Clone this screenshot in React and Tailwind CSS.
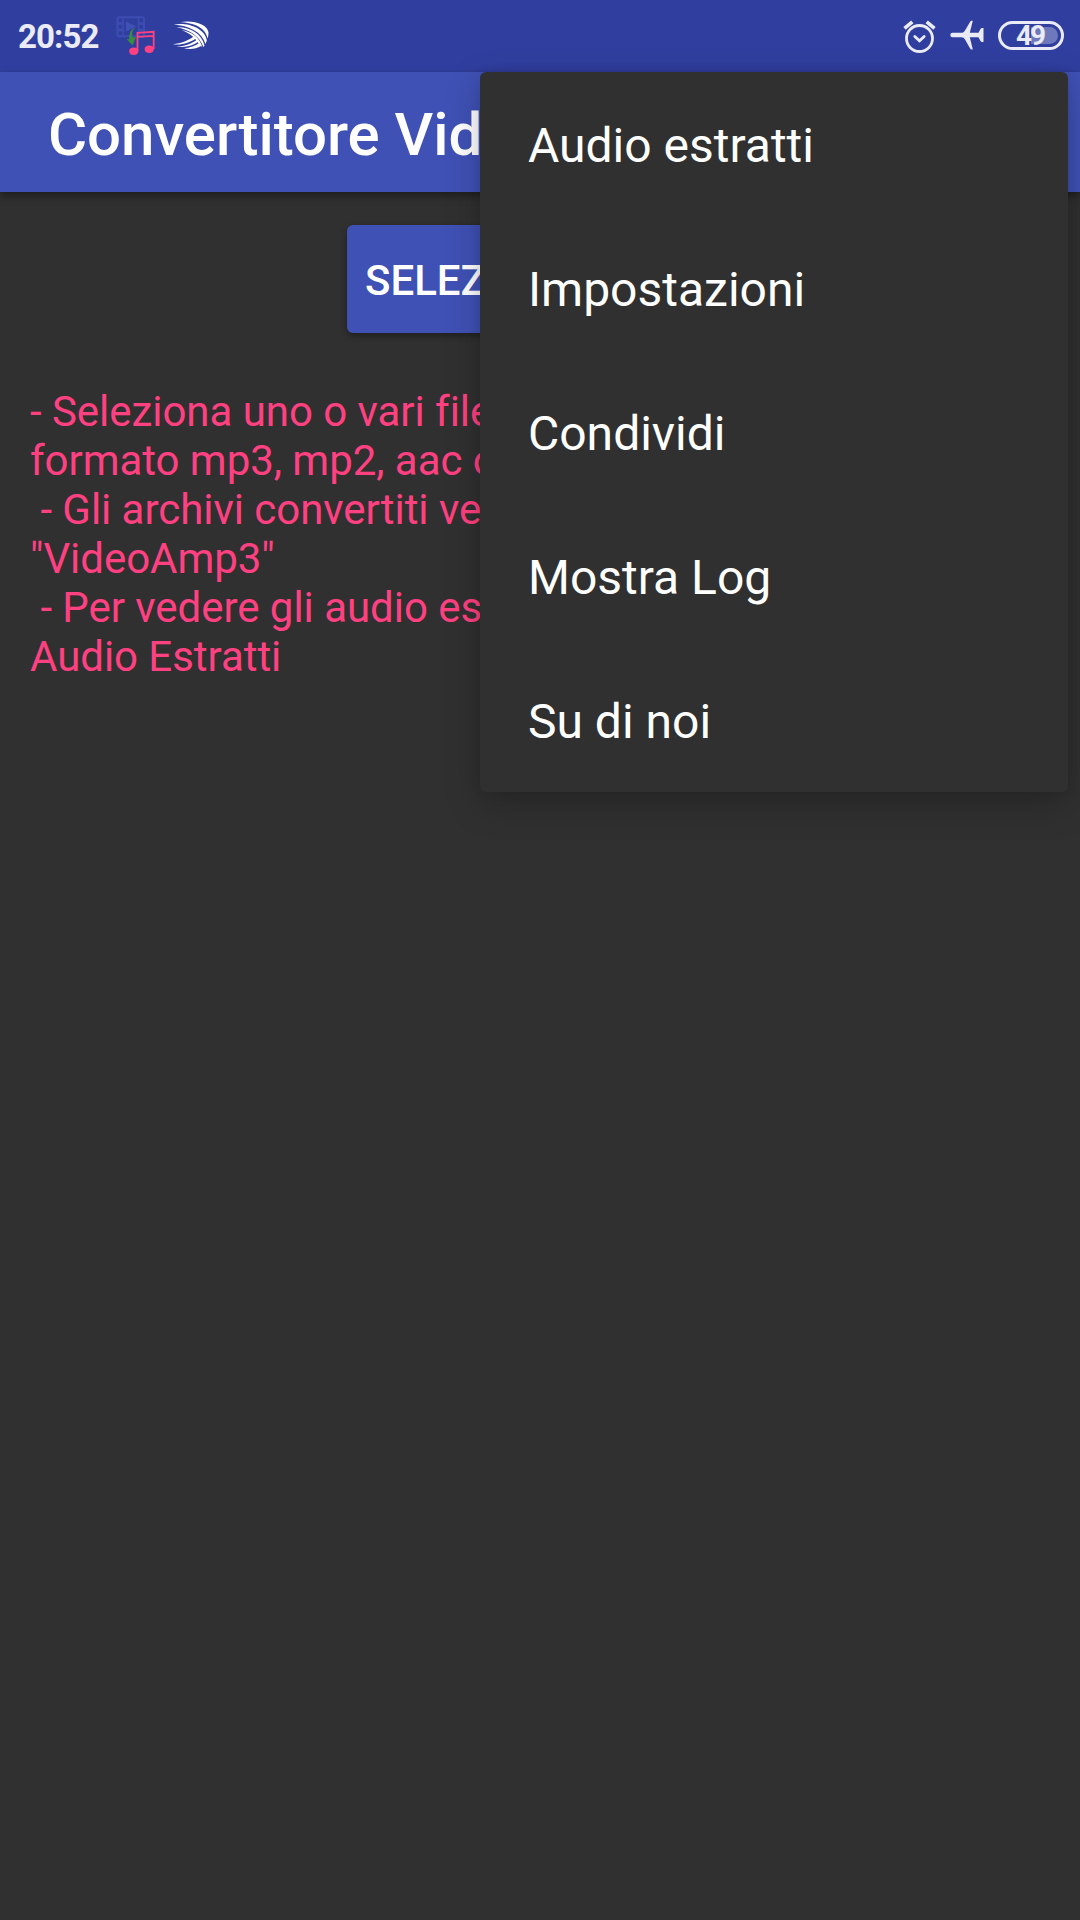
import React from 'react';

const menuItems = ['Audio estratti', 'Impostazioni', 'Condividi', 'Mostra Log', 'Su di noi'];

const hints = [
  '- Seleziona uno o vari file',
  'formato mp3, mp2, aac o',
  ' - Gli archivi convertiti ve',
  '"VideoAmp3"',
  ' - Per vedere gli audio es',
  'Audio Estratti',
];

const ConverterIcon = () => (
  <svg viewBox="0 0 40 40" width="40" height="40" fill="none">
    <rect x="1.5" y="1.2" width="26.5" height="19" rx="1.5" stroke="#3c4db2" strokeWidth="2" />
    <path d="M7 2v18M22.5 2v18" stroke="#3c4db2" strokeWidth="1.6" />
    <path d="M2 7.5h5M2 14h5M22.5 7.5h5M22.5 14h5" stroke="#3c4db2" strokeWidth="2.6" />
    <path d="M10 5.5l10 5-10 5z" fill="#3f51b5" />
    <path d="M19.8 11.5c-3.3 1.8-4.5 5.8-3 10l3.2-.5-3.4 8.5-6-6.5 2.900.2c-1-6 1.800-10.700 6.300-11.700z" fill="#388e3c" />
    <path d="M21.5 35V16.800l16.200-1V33M21.5 20.800l16.200-1" stroke="#ff4081" strokeWidth="1.8" />
    <ellipse cx="17.700" cy="35.200" rx="4.500" ry="3.700" fill="#ff4081" />
    <ellipse cx="33.200" cy="33.200" rx="4.500" ry="3.700" fill="#ff4081" />
  </svg>
);

const KeyboardIcon = () => (
  <svg viewBox="0 0 38 30" width="38" height="30" fill="#fff">
    <path d="M8 2.200C20-.5 36 4 36.500 12.500Q36.500 16 35.500 18.500C34 8 22 2.500 8 2.200z" />
    <path d="M1.500 4.500C16 2 33 8 34.800 20.500L33.500 24C30 12 17 5.500 1.500 4.500z" />
    <path d="M4.500 7.300C17 6.500 29.500 13 32.500 25.500L31.500 27C27 15.500 17 9.500 4.500 7.300z" />
    <path d="M9.500 10.200C19 11.200 27.500 17 30.300 27L27.500 25C24 18 17.500 12.800 9.500 10.200z" />
    <path d="M1 24.300C9 23.500 17 20.500 22.500 15.800L24.500 18C18 22.800 10 25.300 1 24.300z" />
    <path d="M4.500 26.300C12 26.500 19.500 24 25.300 19.200L26.800 21.500C20.500 26.300 12 28 4.500 26.300z" />
    <path d="M12 28.300C18 27.800 23 26 27.500 22.700L29 26C24.500 28.800 18 29.800 12 28.300z" />
  </svg>
);

const AlarmIcon = () => (
  <svg viewBox="0 0 34 34" width="34" height="34" fill="none" stroke="#eaebf6">
    <circle cx="16.5" cy="18.5" r="13" strokeWidth="2.8" />
    <path d="M11.8 16.500l4.700 4.300 4.700-4.300" strokeWidth="2.8" strokeLinecap="round" />
    <path d="M1.5 8.400l7.800-6.600M31.500 8.400l-7.800-6.600" strokeWidth="3.6" />
  </svg>
);

const PlaneIcon = () => (
  <svg viewBox="0 0 34 30" width="34" height="30" fill="#eaebf6">
    <path d="M2.500 12.800H11.500C13 12.800 14 12 15 10.500L20 2Q20.600.8 21.600.8H22.800L19.800 12.800H28.500L30.500 9Q31 8 32 8H33.500V22H32Q31 22 30.500 21L28.500 17.200H19.800L22.800 29.500H21.600Q20.600 29.500 20 28.300L15 19.500C14 18 13 17.200 11.500 17.200H2.500a2.200 2.200 0 0 1 0-4.400z" />
  </svg>
);

const StatusBar = () => (
  <div className="flex h-[72px] items-start bg-[#303f9f] text-[#eaebf6]">
    <span className="ml-[18px] mt-[18px] w-[98px] text-[33px] font-bold leading-[38px] tracking-[-0.9px]">20:52</span>
    <div className="mt-4">
      <ConverterIcon />
    </div>
    <div className="ml-4 mt-5">
      <KeyboardIcon />
    </div>
    <div className="ml-auto mt-5">
      <AlarmIcon />
    </div>
    <div className="ml-[13px] mt-5">
      <PlaneIcon />
    </div>
    <div className="ml-[14px] mr-4 mt-[21px] flex h-[29px] w-[66px] rounded-full border-[3px] border-[#eaebf6] p-[3px]">
      <div className="flex w-full items-center justify-center rounded-full bg-linear-to-r from-transparent from-50% to-white/30 to-50% text-[28px] font-bold leading-none tracking-[-2px]">
        <span className="mr-0.5">49</span>
      </div>
    </div>
  </div>
);

const OverflowMenu = () => (
  <div className="absolute left-[480px] top-[72px] w-[588px] rounded-[6px] bg-[#303030] shadow-[0_12px_36px_rgba(0,0,0,0.22),0_0_12px_rgba(0,0,0,0.08)]">
    {menuItems.map((item) => (
      <div key={item} className="flex h-36 items-center px-12 pt-1 text-[48px] text-white">
        {item}
      </div>
    ))}
  </div>
);

export default function App() {
  return (
    <div className="relative h-[1920px] w-[1080px] overflow-hidden bg-[#303030] font-[Roboto,sans-serif]">
      <StatusBar />
      <header className="flex h-[120px] items-center bg-[#3f51b5] px-12 pt-1.5 shadow-[0_4px_8px_rgba(0,0,0,0.4)]">
        <h1 className="whitespace-nowrap text-[60px] font-medium leading-[70px] tracking-[-0.05px] text-white">Convertitore Vid</h1>
      </header>
      <main className="flex flex-col pt-[33px]">
        <button className="mx-auto h-[108px] w-[386px] rounded-[6px] bg-[#3f51b5] px-[18px] pt-0.5 text-left text-[42px] font-medium text-white shadow-[0_3px_6px_rgba(0,0,0,0.35)]">
          SELEZ
        </button>
        <div className="ml-[30px] mt-[54px] text-[42px] leading-[49px] tracking-[-0.04px] text-[#ff4081]">
          {hints.map((line) => (
            <p key={line} className="whitespace-pre">{line}</p>
          ))}
        </div>
      </main>
      <OverflowMenu />
    </div>
  );
}
